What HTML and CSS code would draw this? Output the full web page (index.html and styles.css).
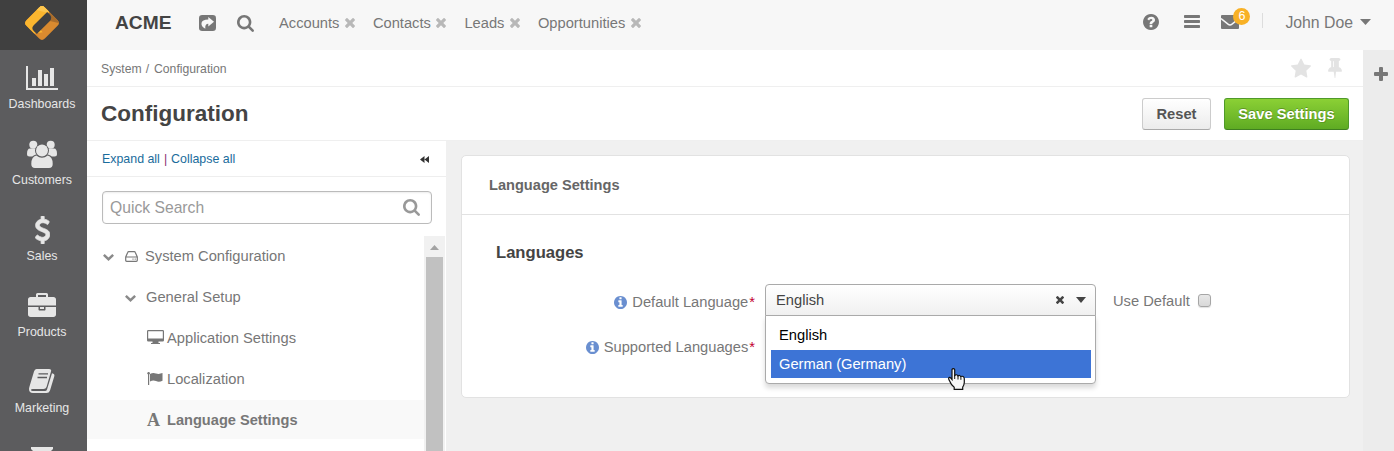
FILE: index.html
```html
<!DOCTYPE html>
<html lang="en">
<head>
<meta charset="utf-8">
<title>Configuration</title>
<link rel="stylesheet" href="styles.css">
</head>
<body>
<svg class="defs" width="0" height="0">
  <symbol id="times" viewBox="302 366 1188 1188"><path d="M1490 1322q0 40-28 68l-136 136q-28 28-68 28t-68-28l-294-294-294 294q-28 28-68 28t-68-28l-136-136q-28-28-28-68t28-68l294-294-294-294q-28-28-28-68t28-68l136-136q28-28 68-28t68 28l294 294 294-294q28-28 68-28t68 28l136 136q28 28 28 68t-28 68l-294 294 294 294q28 28 28 68z"/></symbol>
  <symbol id="search" viewBox="64 128 1664 1664"><path d="M1216 832q0-185-131.5-316.5t-316.5-131.5-316.5 131.5-131.5 316.5 131.5 316.5 316.5 131.5 316.5-131.5 131.5-316.5zm512 832q0 52-38 90t-90 38q-54 0-90-38l-343-342q-179 124-399 124-143 0-273.5-55.5t-225-150-150-225-55.5-273.5 55.5-273.5 150-225 225-150 273.5-55.5 273.5 55.5 225 150 150 225 55.5 273.5q0 220-124 399l343 343q37 37 37 90z"/></symbol>
  <symbol id="info" viewBox="128 128 1536 1536"><path d="M1152 1376v-160q0-14-9-23t-23-9h-96v-512q0-14-9-23t-23-9h-320q-14 0-23 9t-9 23v160q0 14 9 23t23 9h96v320h-96q-14 0-23 9t-9 23v160q0 14 9 23t23 9h448q14 0 23-9t9-23zm-128-896v-160q0-14-9-23t-23-9h-192q-14 0-23 9t-9 23v160q0 14 9 23t23 9h192q14 0 23-9t9-23zm640 416q0 209-103 385.5t-279.5 279.5-385.5 103-385.5-103-279.5-279.5-103-385.5 103-385.5 279.5-279.5 385.5-103 385.5 103 279.5 279.5 103 385.5z"/></symbol>
  <symbol id="chevron" viewBox="0 0 11 7"><path d="M0 1.8 1.7 0 5.500 3.500 9.300 0 11 1.800 5.500 7z"/></symbol>
</svg>

<div class="app">
  <nav class="sidebar">
    <div class="logo">
      <svg width="34" height="34" viewBox="0 0 34 34">
        <g transform="rotate(-45 17 17)">
          <rect x="4" y="4" width="26" height="26" rx="4" fill="#d98a2f"/>
          <path d="M8 4h18a4 4 0 0 1 4 4v7H4V8a4 4 0 0 1 4-4z" fill="#fbb62f"/>
          <path d="M22.500 4H26a4 4 0 0 1 4 4v5.500h-2z" fill="#fdc64e"/>
          <path d="M4 15h7v9L4 19z" fill="#fbb62f"/>
          <path d="M24 14.500h6V26a4 4 0 0 1-1.200 2.800L24 21z" fill="#a96d2c"/>
          <path d="M9.500 12.800h19v3.900a4.500 4.500 0 0 1-4.500 4.500H5.500v-4.400a4 4 0 0 1 4-4z" fill="#404040"/>
        </g>
      </svg>
    </div>
    <a class="side-item"><span class="side-icon"><svg width="32" height="24" viewBox="0 128 2048 1536" preserveAspectRatio="none"><path d="M640 896v512h-256v-512h256zm384-512v1024h-256v-1024h256zm1024 1152v128h-2048v-1536h128v1408h1920zm-640-896v768h-256v-768h256zm384-384v1152h-256v-1152h256z"/></svg></span>Dashboards</a>
    <a class="side-item"><span class="side-icon"><svg width="30" height="28" viewBox="0 0 30 28"><circle cx="6.300" cy="4.700" r="4"/><circle cx="23.700" cy="4.700" r="4"/><path d="M3 8.500h6l3 8H2.500Q0 16.500 0 14q0-5.500 3-5.500zM27 8.500h-6l-3 8h9.500Q30 16.500 30 14q0-5.500-3-5.500z"/><path class="cut" d="M9 14.500h12q5.500 1 5.500 9 0 5-4 5h-15q-4 0-4-5 0-8 5.500-9z"/><circle class="cut" cx="15" cy="10.600" r="7"/><circle cx="15" cy="10.600" r="6"/><path d="M9.300 15.500q5.700 4.500 11.400 0 5 1 5 8.500 0 4-3.700 4H8q-3.700 0-3.700-4 0-7.500 5-8.500z"/></svg></span>Customers</a>
    <a class="side-item"><span class="side-icon"><svg width="15" height="28" viewBox="426 0 940 1792"><path stroke="#e6e6e6" stroke-width="50" d="M1362 1185q0 153-99.5 263.500t-258.500 136.500v175q0 14-9 23t-23 9h-135q-13 0-22.500-9.500t-9.500-22.500v-175q-66-9-127.500-31t-101.500-44.500-74-48-46.500-37.500-17.500-18q-17-21-2-41l103-135q7-10 23-12 15-2 24 9l2 2q113 99 243 125 37 8 74 8 81 0 142.500-43t61.500-122q0-28-15-53t-33.500-42-58.500-37.500-66-32-80-32.500q-39-16-61.500-25t-61.500-26.500-62.500-31-56.500-35.500-53.500-42.500-43.500-49-35.500-58-21-66.500-8.500-78q0-138 98-242t255-134v-180q0-13 9.500-22.500t22.500-9.500h135q14 0 23 9t9 23v176q57 6 110.500 23t87 33.500 63.500 37.500 39 29 15 14q17 18 5 38l-81 146q-8 15-23 16-14 3-27-7-3-3-14.500-12t-39-26.500-58.500-32-74.500-26-85.500-11.500q-95 0-155 43t-60 111q0 26 8.500 48t29.500 41.500 39.500 33 56 31 60.500 27 70 27.500q53 20 81 31.500t76 35 75.500 42.500 62 50 53 63.500 31.500 76.500 13 94z"/></svg></span>Sales</a>
    <a class="side-item"><span class="side-icon lift"><svg width="28" height="24" viewBox="0 0 1792 1536"><path d="M640 256h512v-128h-512v128zm1152 640v480q0 66-47 113t-113 47h-1472q-66 0-113-47t-47-113v-480h672v160q0 26 19 45t45 19h320q26 0 45-19t19-45v-160h672zm-768 0v128h-256v-128h256zm768-480v384h-1792v-384q0-66 47-113t113-47h352v-160q0-40 28-68t68-28h576q40 0 68 28t28 68v160h352q66 0 113 47t47 113z"/></svg></span>Products</a>
    <a class="side-item"><span class="side-icon lift"><svg width="26" height="24" viewBox="0 0 26 24"><path d="M7.500 0H20q2.800 0 2 2.600L17.500 18q-.7 2-3 2H3.700q-1.700 0-1.700 1t1.700 1H16q1.500 0 2-1.500L23 4.300q3 .7 2.300 2.900L21 21.500Q20 24 17.500 24H4Q0 24 0 20q0-1 .5-2.500L5 2.500Q5.700 0 7.500 0z"/><path class="line" d="M9.500 4.800H19M8.500 8.500H18"/></svg></span>Marketing</a>
    <a class="side-item"><span class="side-icon filter"><svg width="22" height="20" viewBox="0 0 22 20"><path d="M0 0h22v2l-8 8v10l-6-5v-5L0 2z"/></svg></span></a>
  </nav>

  <div class="page">
    <header class="topbar">
      <strong class="brand">ACME</strong>
      <svg class="share" width="17" height="16" viewBox="0 0 17 16"><rect width="17" height="16" rx="3.200"/><path class="arrow" d="M9.300 2 15 6.800 9.300 11.600V8.800Q5.800 8.800 6.300 13.800 2 11.500 2.500 8 3 4.500 9.300 4.500z"/></svg>
      <svg class="top-search" width="17" height="17"><use href="#search"/></svg>
      <a class="tab">Accounts<svg width="10" height="10"><use href="#times"/></svg></a>
      <a class="tab">Contacts<svg width="10" height="10"><use href="#times"/></svg></a>
      <a class="tab">Leads<svg width="10" height="10"><use href="#times"/></svg></a>
      <a class="tab">Opportunities<svg width="10" height="10"><use href="#times"/></svg></a>
      <div class="top-right">
        <svg class="help" width="16" height="16" viewBox="128 128 1536 1536"><path d="M1024 1376v-192q0-14-9-23t-23-9h-192q-14 0-23 9t-9 23v192q0 14 9 23t23 9h192q14 0 23-9t9-23zm256-672q0-88-55.500-163t-138.500-116-170-41q-243 0-371 213-15 24 8 42l132 100q7 6 19 6 16 0 25-12 53-68 86-92 34-24 86-24 48 0 85.500 26t37.500 59q0 38-20 61t-68 45q-63 28-115.500 86.500t-52.500 125.500v36q0 14 9 23t23 9h192q14 0 23-9t9-23q0-19 21.500-49.500t54.500-49.500q32-18 49-28.500t46-35 44.500-48 28-60.500 12.500-81zm384 192q0 209-103 385.500t-279.500 279.500-385.500 103-385.500-103-279.500-279.500-103-385.500 103-385.500 279.500-279.500 385.500-103 385.500 103 279.500 279.500 103 385.500z"/></svg>
        <svg class="bars" width="16" height="13" viewBox="0 0 16 13"><rect width="16" height="3" rx=".7"/><rect y="5" width="16" height="3" rx=".7"/><rect y="10" width="16" height="3" rx=".7"/></svg>
        <span class="mail"><svg width="18" height="14" viewBox="0 0 18 14"><rect width="18" height="14" rx="1"/><path class="fold" d="M0 3.500 7 9.200q2 1.400 4 0l7-5.700"/></svg><b class="badge">6</b></span>
        <span class="divider"></span>
        <span class="user">John Doe</span>
        <svg class="user-caret" width="11" height="6" viewBox="0 0 11 6"><path d="M0 0h11L5.500 6z"/></svg>
      </div>
    </header>

    <div class="below">
      <main class="content">
        <div class="crumbs"><span>System</span><span class="slash">/</span><span>Configuration</span>
          <span class="marks">
            <svg width="20" height="20" viewBox="64 32 1664 1587"><path d="M1728 647q0 22-26 48l-363 354 86 500q1 7 1 20 0 21-10.500 35.500t-30.500 14.500q-19 0-40-12l-449-236-449 236q-22 12-40 12-21 0-31.500-14.500t-10.500-35.500q0-6 2-20l86-500-364-354q-25-27-25-48 0-37 56-46l502-73 225-455q19-41 49-41t49 41l225 455 502 73q56 9 56 46z"/></svg>
            <svg width="14" height="20" viewBox="320 128 1152 1664"><path d="M800 864v-448q0-14-9-23t-23-9-23 9-9 23v448q0 14 9 23t23 9 23-9 9-23zm672 352q0 26-19 45t-45 19h-429l-51 483q-2 12-10.500 20.500t-20.500 8.500h-1q-27 0-32-27l-76-485h-404q-26 0-45-19t-19-45q0-123 78.500-221.500t177.500-98.500v-512q-52 0-90-38t-38-90 38-90 90-38h640q52 0 90 38t38 90-38 90-90 38v512q99 0 177.500 98.500t78.500 221.500z"/></svg>
          </span>
        </div>
        <div class="title-row">
          <h1>Configuration</h1>
          <button class="btn">Reset</button>
          <button class="btn save">Save Settings</button>
        </div>
        <div class="columns">
          <aside class="tree-panel">
            <div class="tree-links"><a>Expand all</a><i>|</i><a>Collapse all</a>
              <svg width="9" height="7" viewBox="0 0 9 7"><path d="M4.500 0v7L0 3.500zM9 0v7L4.500 3.500z"/></svg></div>
            <div class="quick"><span>Quick Search</span><svg width="17" height="17"><use href="#search"/></svg></div>
            <div class="tree-area">
              <ul class="tree">
                <li class="l1"><svg width="11" height="7" class="chev"><use href="#chevron"/></svg><svg class="hdd" width="13" height="11" viewBox="0 0 13 11"><path d="M.7 6 2.800 1.200Q3 .6 3.700.6h5.600q.7 0 .9.600L12.300 6v3.300q0 1-1 1H1.700q-1 0-1-1zM.7 6h11.600M7.500 8.200h1M9.700 8.200h1"/></svg>System Configuration</li>
                <li class="l2"><svg width="11" height="7" class="chev"><use href="#chevron"/></svg>General Setup</li>
                <li class="l3"><svg width="17" height="14" viewBox="0 0 17 14"><path fill-rule="evenodd" d="M1.300 0h14.400Q17 0 17 1.300v8.900q0 1.300-1.300 1.300h-4.200V13H13v1H4v-1h1.500v-1.500H1.300Q0 11.500 0 10.200V1.300Q0 0 1.300 0zM1.200 1.200v7.300h14.600V1.200z"/></svg>Application Settings</li>
                <li class="l3"><svg width="17" height="13" viewBox="0 0 17 13"><path d="M1 .3h1.200V13H1zM3 2Q6 .2 9 1.500q3 1 6.500-.4V8.800q-3.500 1.500-6.500.3T3 9.600z"/><circle cx="1.600" cy="1.200" r="1.200"/></svg>Localization</li>
                <li class="l3 active"><span class="font-glyph">A</span>Language Settings</li>
              </ul>
              <div class="scroll"><svg width="9" height="5" viewBox="0 0 9 5"><path d="M4.500 0 9 5H0z"/></svg><div class="thumb"></div></div>
            </div>
          </aside>
          <section class="workspace">
            <div class="card">
              <h2>Language Settings</h2>
              <div class="card-body">
                <h3>Languages</h3>
                <div class="field">
                  <label><svg width="13" height="13"><use href="#info"/></svg>Default Language<em>*</em></label>
                  <div class="select">
                    <span>English</span>
                    <svg width="8" height="8"><use href="#times"/></svg>
                    <svg width="10" height="6" viewBox="0 0 10 6"><path d="M0 0h10L5 6z"/></svg>
                    <div class="menu">
                      <div class="option">English</div>
                      <div class="option hover">German (Germany)</div>
                      <svg class="cursor" width="17" height="22" viewBox="0 0 17 22"><path d="M4 1.500Q4.300.6 5.300.6t1.400 1V7.500Q8.800 5.800 10 7.900q1.700-1.100 2.700.6 3.100-1 3.600 2.100v3.900q-.2 2.700-1.600 4.700V21.300H6.200V19.200Q3 16.800 1.900 13.500.7 11.500.6 10.500q.5-1.800 2.100-.6L4 11.500z" fill="#f8f8f8" stroke="#111" stroke-width="1.200"/><path d="M6.700 7v4M10 8v3.500M12.900 8.700v3.100" stroke="#111" stroke-width="1"/></svg>
                    </div>
                  </div>
                  <span class="use-default">Use Default</span><span class="checkbox"></span>
                </div>
                <div class="field second">
                  <label><svg width="13" height="13"><use href="#info"/></svg>Supported Languages<em>*</em></label>
                </div>
              </div>
            </div>
          </section>
        </div>
      </main>
      <div class="rail"><svg width="14" height="14" viewBox="0 0 14 14"><path d="M5 1q0-1 1-1h2q1 0 1 1v4h4q1 0 1 1v2q0 1-1 1H9v4q0 1-1 1H6q-1 0-1-1V9H1Q0 9 0 8V6q0-1 1-1h4z"/></svg></div>
    </div>
  </div>
</div>
</body>
</html>
```

FILE: styles.css
```css
* { box-sizing: border-box; }
body { margin: 0; font: 14.7px/20px "Liberation Sans", Arial, sans-serif; color: #777; overflow: hidden; }
svg { display: block; flex: none; fill: currentColor; }
.defs { position: absolute; }
h1, h2, h3, ul { margin: 0; padding: 0; }

.app { display: flex; width: 1394px; height: 451px; overflow: hidden; background: #fff; }

.sidebar { width: 87px; flex: none; background: #5c5c5e; overflow: hidden; }
.logo { height: 50px; background: #404040; padding: 6px 0 0 25px; }
.side-item { display: flex; flex-direction: column; align-items: center; height: 76px; padding: 12px 3px 0 0; font-size: 12.4px; line-height: 16px; color: #e6e6e6; }
.side-icon { display: flex; align-items: center; justify-content: center; height: 32px; margin-bottom: 2px; }
.side-icon.lift { height: 30px; margin-bottom: 4px; }
.side-icon.filter { align-items: flex-start; padding-top: 5px; }
.cut { fill: #5c5c5e; }
.line { stroke: #5c5c5e; stroke-width: 1.3; }

.page { flex: 1; display: flex; flex-direction: column; min-width: 0; }
.topbar { height: 50px; flex: none; display: flex; align-items: center; padding: 0 23px 5px 28px; background: #f7f7f7; }
.brand { width: 84px; font-size: 19.2px; color: #444; }
.share { margin-right: 21px; }
.arrow { fill: #f7f7f7; }
.top-search { width: 17px; margin: 2px 25px 0 0; }
.tab { display: flex; align-items: center; margin-right: 18px; white-space: nowrap; }
.tab svg { margin-left: 5.500px; color: #b8b8b8; margin-top: 1px; }
.top-right { margin-left: auto; display: flex; align-items: center; }
.help { margin-bottom: 2px; }
.bars { margin: 0 0 2px 25px; }
.mail { position: relative; margin-left: 21px; margin-bottom: 1px; }
.fold { fill: none; stroke: #f7f7f7; stroke-width: 1.5; }
.badge { position: absolute; left: 12px; top: -7px; width: 17px; height: 17px; border-radius: 50%; background: #f8b126; color: #fff; font: 12.5px/16px "Liberation Sans", Arial, sans-serif; text-align: center; }
.divider { width: 1px; height: 15px; margin: 0 22px 4px 23px; background: #ddd; }
.user { font-size: 15.8px; }
.user-caret { margin: 0 0 2px 7px; }

.below { flex: 1; display: flex; min-height: 0; }
.content { flex: 1; display: flex; flex-direction: column; min-width: 0; }
.rail { width: 31px; padding: 17px 0 0 11px; background: #ececec; }
.crumbs { height: 37px; flex: none; display: flex; align-items: center; padding: 1px 21px 0 14px; border-bottom: 1px solid #efefef; font-size: 12.2px; }
.slash { margin: 0 5px 0 4px; }
.marks { margin-left: auto; display: flex; gap: 17px; color: #e3e3e3; margin-top: -1px; }
.title-row { height: 54px; flex: none; display: flex; align-items: center; padding: 0 14px 0 14px; }
h1 { margin-right: auto; font-size: 22.5px; color: #444; }
.btn { height: 32px; width: 69px; padding: 0 0 1px; border: 1px solid #ccc; border-bottom-color: #aaa; border-radius: 3px; background: linear-gradient(#fff, #ececec); font: bold 14.7px "Liberation Sans", Arial, sans-serif; color: #555; }
.btn.save { width: 125px; margin-left: 13px; border-color: #4f9a2a; border-bottom-color: #3f7f20; background: linear-gradient(#8bd035, #5fab23); color: #fff; text-shadow: 0 -1px 0 rgba(0, 0, 0, .25), 1px 1px 0 rgba(0, 0, 0, .15); }

.columns { flex: 1; display: flex; min-height: 0; border-top: 1px solid #efefef; margin-top: -1px; }
.tree-panel { width: 359px; flex: none; display: flex; flex-direction: column; }
.tree-links { height: 36px; display: flex; align-items: center; padding: 0 17px 0 15px; border-bottom: 1px solid #eee; font-size: 12.4px; color: #1a6c9c; }
.tree-links i { margin: 0 4px; font-style: normal; color: #8b2c70; }
.tree-links svg { margin: 2px 0 0 auto; color: #333; }
.quick { display: flex; align-items: center; justify-content: space-between; height: 33px; flex: none; margin: 14px 14px 12px 15px; padding: 0 11px 0 7px; border: 1px solid #bbb; border-radius: 4px; box-shadow: inset 0 1px 2px rgba(0, 0, 0, .08); font-size: 15.7px; color: #999; }
.tree-area { flex: 1; display: flex; min-height: 0; overflow: hidden; }
.tree { flex: 1; list-style: none; }
.tree li { display: flex; align-items: center; height: 39px; margin-bottom: 2px; padding-top: 1px; }
.l1 { padding-left: 16px; }
.l2 { padding-left: 38px; }
.l3 { padding-left: 60px; }
.l3 svg { margin: 0 3px 2px 0; }
.chev { margin: 3px 11px 0 0; color: #8a8a8a; }
.l2 .chev { margin-right: 10px; }
.hdd { margin-right: 7px; fill: none; stroke: currentColor; stroke-width: 1.2; }
.tree .active { background: #f9f9f9; font-weight: bold; font-size: 14.6px; }
.font-glyph { width: 20px; font: bold 18px/20px "Liberation Serif", serif; }
.scroll { width: 21px; margin-right: 1px; padding-top: 9px; background: #f1f1f1; color: #a3a3a3; display: flex; flex-direction: column; align-items: center; }
.thumb { width: 17px; flex: 1; margin-top: 7px; background: #c1c1c1; }

.workspace { flex: 1; padding: 14px 13px 0 15px; background: #f0f0f0; }
.card { height: 243px; border: 1px solid #e2e2e2; border-radius: 5px; background: #fff; }
h2 { height: 59px; padding-left: 27px; border-bottom: 1px solid #e2e2e2; font-size: 14.6px; line-height: 59px; color: #666; }
.card-body { padding: 27px 0 0 34px; }
h3 { font-size: 16.6px; line-height: 22px; color: #444; }
.field { display: flex; align-items: center; height: 32px; margin-top: 20px; }
.field.second { margin-top: 13px; }
label { display: flex; align-items: center; justify-content: flex-end; width: 259px; padding-top: 4px; white-space: nowrap; }
label svg { margin-right: 5px; color: #6a8fd0; }
em { margin-left: 1px; font-style: normal; color: #c2002f; }
.select { position: relative; display: flex; align-items: center; width: 331px; height: 32px; margin-left: 10px; padding: 0 9px 0 10px; border: 1px solid #aaa; border-radius: 4px 4px 0 0; background: linear-gradient(#fff, #f0f0f0); color: #444; }
.select > span { margin-right: auto; }
.select > svg { margin-left: 12px; }
.menu { position: absolute; left: -1px; top: 30px; width: 331px; height: 69px; padding: 5px 4px 0 5px; border: 1px solid #aaa; border-radius: 0 0 4px 4px; background: #fff; box-shadow: 0 4px 5px rgba(0, 0, 0, .15); }
.option { height: 29px; padding-left: 8px; line-height: 28px; color: #000; }
.option.hover { height: 28px; background: #3d74d6; color: #fff; }
.cursor { position: absolute; left: 182px; top: 52px; }
.use-default { margin: 2px 8px 0 17px; }
.checkbox { width: 13px; height: 13px; border: 1px solid #a6a6a6; border-radius: 3px; background: linear-gradient(#e8e8e8, #d8d8d8); box-shadow: 0 1px 1px rgba(0, 0, 0, .12); }
```
